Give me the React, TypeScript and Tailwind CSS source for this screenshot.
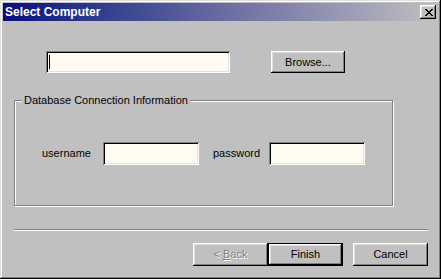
import { ReactNode } from 'react';

const raised =
  'shadow-[inset_-1px_-1px_#000,inset_1px_1px_#fff,inset_-2px_-2px_#808080,inset_2px_2px_#dfdfdf]';
const sunken =
  'shadow-[inset_1px_1px_#808080,inset_-1px_-1px_#fff,inset_2px_2px_#000,inset_-2px_-2px_#dfdfdf]';

function Field({ w, h, caret }: { w: string; h: string; caret?: boolean }) {
  return (
    <div className={`${w} ${h} bg-[#fffbf0] ${sunken} flex items-center pl-[3px]`}>
      {caret && <span className="w-[1px] h-[14px] bg-black" />}
    </div>
  );
}

function Button({
  children,
  def,
  disabled,
  className = '',
}: {
  children: ReactNode;
  def?: boolean;
  disabled?: boolean;
  className?: string;
}) {
  return (
    <button
      className={`w-[75px] h-[23px] bg-[#c0c0c0] text-[11px] flex items-center justify-center ${
        disabled ? 'text-[#808080] [text-shadow:1px_1px_#fff]' : 'text-black'
      } ${def ? 'border border-black' : ''} ${raised} ${className}`}
    >
      {children}
    </button>
  );
}

function CloseGlyph() {
  const rows = ['11000011', '01100110', '00111100', '00011000', '00111100', '01100110', '11000011'];
  return (
    <svg width="8" height="7" viewBox="0 0 8 7" shapeRendering="crispEdges">
      {rows.map((r, y) =>
        r.split('').map((c, x) => (c === '1' ? <rect key={`${x}-${y}`} x={x} y={y} width="1" height="1" fill="#000" /> : null))
      )}
    </svg>
  );
}

export default function App() {
  return (
    <div
      className={`w-[441px] h-[279px] p-[3px] bg-[#c0c0c0] flex flex-col font-['Liberation_Sans',Arial,sans-serif] shadow-[inset_-1px_-1px_#000,inset_1px_1px_#dfdfdf,inset_-2px_-2px_#808080,inset_2px_2px_#fff]`}
    >
      {/* title bar */}
      <div className="h-[18px] flex items-center pl-[2px] pr-[2px] bg-gradient-to-r from-[#0a0a7a] via-[#6a6aa0] to-[#c0c0c0]">
        <span className="text-white font-bold text-[12px] leading-none">Select Computer</span>
        <button className={`ml-auto w-[16px] h-[14px] bg-[#c0c0c0] flex items-center justify-center pl-[1px] ${raised}`}>
          <CloseGlyph />
        </button>
      </div>

      {/* body */}
      <div className="flex flex-col text-[11px] text-black">
        <div className="flex mt-[30px] ml-[43px]">
          <Field w="w-[184px]" h="h-[22px]" caret />
          <button className={`ml-[41px] w-[74px] h-[22px] bg-[#c0c0c0] text-[11px] flex items-center justify-center ${raised}`}>
            Browse...
          </button>
        </div>

        <div className="relative mt-[27px] ml-[11px] w-[379px] h-[106px] border border-[#808080] shadow-[inset_1px_1px_#fff,1px_1px_#fff]">
          <span className="absolute left-[7px] -top-[8px] px-[2px] leading-[14px] bg-[#c0c0c0]">
            Database Connection Information
          </span>
          <div className="flex items-center h-full pl-[27px]">
            <span className="w-[61px]">username</span>
            <Field w="w-[96px]" h="h-[23px]" />
            <span className="ml-[14px] w-[56px]">password</span>
            <Field w="w-[96px]" h="h-[23px]" />
          </div>
        </div>

        <div className="mt-[23px] ml-[11px] w-[414px] h-[2px] border-t border-t-[#808080] border-b border-b-white" />

        <div className="flex justify-end mt-[12px] mr-[10px]">
          <Button disabled>
            &lt; <span className="underline ml-[3px]">B</span>ack
          </Button>
          <Button def>Finish</Button>
          <Button className="ml-[10px]">Cancel</Button>
        </div>
      </div>
    </div>
  );
}
